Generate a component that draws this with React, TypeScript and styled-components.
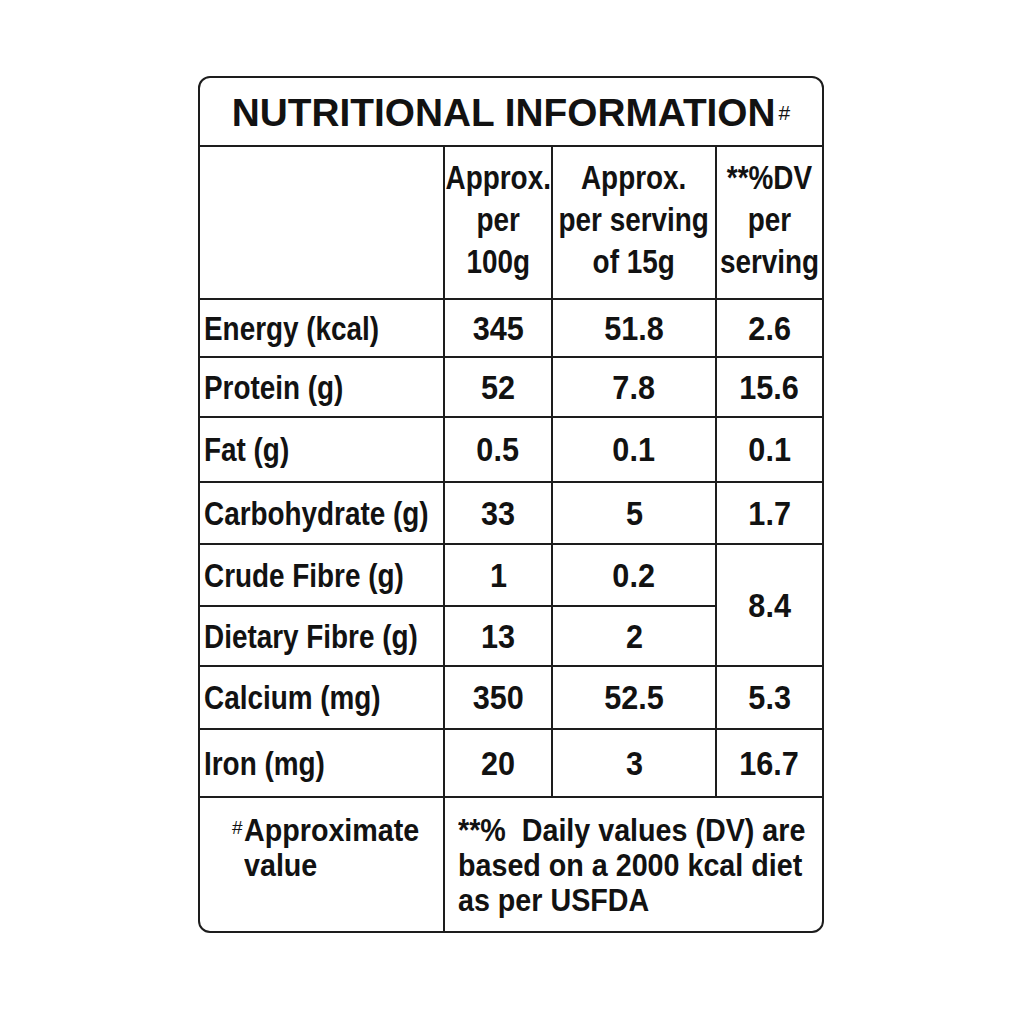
import React from 'react';
import styled, { createGlobalStyle } from 'styled-components';

const Global = createGlobalStyle`
  html, body { margin: 0; padding: 0; background: #ffffff; }
  body { font-family: "Liberation Sans", Arial, sans-serif; color: #121212; }
`;

const Page = styled.div`
  padding: 76px 0 0 198px;
`;

const Panel = styled.div`
  display: grid;
  box-sizing: border-box;
  width: 626px;
  grid-template-columns: 243px 106px 162px 105px;
  grid-template-rows: 67px 151px 56px 58px 63px 60px 60px 58px 61px 66px 133px;
  gap: 2px;
  border: 2px solid #1d1d1d;
  border-radius: 12px;
  background: #1d1d1d;
  overflow: hidden;
`;

const Cell = styled.div<{ $span?: number; $rows?: number; $align?: 'left' | 'center' }>`
  background: #ffffff;
  display: flex;
  align-items: center;
  justify-content: ${(p) => (p.$align === 'left' ? 'flex-start' : 'center')};
  padding-left: ${(p) => (p.$align === 'left' ? '4px' : '0')};
  grid-column: span ${(p) => p.$span ?? 1};
  grid-row: span ${(p) => p.$rows ?? 1};
  font-weight: 700;
  font-size: 34px;
  min-width: 0;
  white-space: nowrap;
`;

const TitleCell = styled(Cell)`
  font-size: 38.8px;
  padding-top: 2px;
`;

const TitleHash = styled.sup`
  font-size: 21px;
  font-weight: 400;
  vertical-align: 0.55em;
  margin-left: 3px;
`;

const HeadCell = styled(Cell)`
  line-height: 42px;
  text-align: center;
  padding-bottom: 8px;
`;

const Narrow = styled.span<{ $origin?: string; $scale?: number }>`
  display: inline-block;
  transform: scaleX(${(p) => p.$scale ?? 0.82});
  transform-origin: ${(p) => p.$origin ?? 'center'};
`;

const FootCell = styled(Cell)`
  align-items: flex-start;
  justify-content: flex-start;
  font-size: 30.5px;
  line-height: 35.2px;
`;

const FootLeft = styled(FootCell)`
  padding: 15px 0 0 32px;
`;

const FootRight = styled(FootCell)`
  padding: 15px 0 0 13px;
`;

const FootHash = styled.span`
  font-size: 19px;
  font-weight: 400;
  line-height: 19px;
  margin-top: 5px;
  margin-right: 1px;
`;

type Row = { label: string; a: string; b: string; dv?: string; dvRows?: number };

const rows: Row[] = [
  { label: 'Energy (kcal)', a: '345', b: '51.8', dv: '2.6' },
  { label: 'Protein (g)', a: '52', b: '7.8', dv: '15.6' },
  { label: 'Fat (g)', a: '0.5', b: '0.1', dv: '0.1' },
  { label: 'Carbohydrate (g)', a: '33', b: '5', dv: '1.7' },
  { label: 'Crude Fibre (g)', a: '1', b: '0.2', dv: '8.4', dvRows: 2 },
  { label: 'Dietary Fibre (g)', a: '13', b: '2' },
  { label: 'Calcium (mg)', a: '350', b: '52.5', dv: '5.3' },
  { label: 'Iron (mg)', a: '20', b: '3', dv: '16.7' },
];

const NUM_SCALE = 0.9;
const FOOT_SCALE = 0.94;

export default function App() {
  return (
    <>
      <Global />
      <Page>
        <Panel>
          <TitleCell $span={4}>
            NUTRITIONAL INFORMATION<TitleHash>#</TitleHash>
          </TitleCell>

          <HeadCell />
          <HeadCell>
            <Narrow>
              Approx.
              <br />
              per
              <br />
              100g
            </Narrow>
          </HeadCell>
          <HeadCell>
            <Narrow>
              Approx.
              <br />
              per serving
              <br />
              of 15g
            </Narrow>
          </HeadCell>
          <HeadCell>
            <Narrow>
              **%DV
              <br />
              per
              <br />
              serving
            </Narrow>
          </HeadCell>

          {rows.map((r) => (
            <React.Fragment key={r.label}>
              <Cell $align="left">
                <Narrow $origin="left">{r.label}</Narrow>
              </Cell>
              <Cell>
                <Narrow $scale={NUM_SCALE}>{r.a}</Narrow>
              </Cell>
              <Cell>
                <Narrow $scale={NUM_SCALE}>{r.b}</Narrow>
              </Cell>
              {r.dv !== undefined && (
                <Cell $rows={r.dvRows}>
                  <Narrow $scale={NUM_SCALE}>{r.dv}</Narrow>
                </Cell>
              )}
            </React.Fragment>
          ))}

          <FootLeft>
            <FootHash>#</FootHash>
            <Narrow $origin="left" $scale={FOOT_SCALE}>
              Approximate
              <br />
              value
            </Narrow>
          </FootLeft>
          <FootRight $span={3}>
            <Narrow $origin="left" $scale={FOOT_SCALE}>
              **%&nbsp; Daily values (DV) are
              <br />
              based on a 2000 kcal diet
              <br />
              as per USFDA
            </Narrow>
          </FootRight>
        </Panel>
      </Page>
    </>
  );
}
